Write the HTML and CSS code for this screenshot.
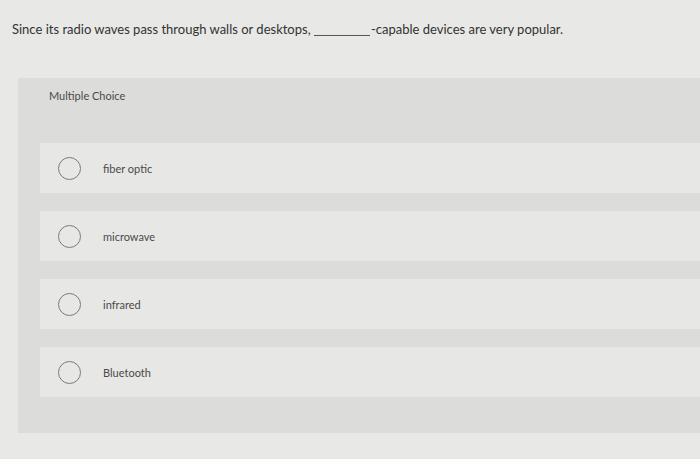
FILE: index.html
```html
<!DOCTYPE html>
<html>
<head>
<meta charset="utf-8">
<link rel="stylesheet" href="styles.css">
</head>
<body>
<div class="page">
  <p class="question">Since its radio waves pass through walls or desktops, <span class="blank"></span>-capable devices are very popular.</p>
  <div class="panel">
    <div class="label">Multiple Choice</div>
    <div class="options">
      <div class="option"><span class="radio"></span><span class="text">fiber optic</span></div>
      <div class="option"><span class="radio"></span><span class="text">microwave</span></div>
      <div class="option"><span class="radio"></span><span class="text">infrared</span></div>
      <div class="option"><span class="radio"></span><span class="text">Bluetooth</span></div>
    </div>
  </div>
</div>
</body>
</html>
```
FILE: styles.css
```css
html, body {
  margin: 0;
  padding: 0;
  background: #e8e8e6;
  height: 100%;
}
.page {
  font-family: "Lato", "Open Sans", "Liberation Sans", sans-serif;
  color: #3a3a3a;
  height: 459px;
  overflow: hidden;
}
.question {
  margin: 0;
  padding: 20px 0 0 12px;
  font-size: 13px;
  line-height: 18px;
  color: #333;
}
.blank {
  display: inline-block;
  width: 56px;
  border-bottom: 1px solid #555;
  margin-right: 1px;
  vertical-align: -2px;
}
.panel {
  margin: 40px 0 0 18px;
  background: #dcdcda;
  height: 355px;
  padding: 10px 0 0 0;
  box-sizing: border-box;
}
.label {
  font-size: 11px;
  color: #4a4a4a;
  padding-left: 31px;
  line-height: 16px;
}
.options {
  display: flex;
  flex-direction: column;
  gap: 18px;
  margin: 39px 0 0 22px;
}
.option {
  display: flex;
  align-items: center;
  height: 50px;
  background: #e7e7e5;
  padding-left: 18px;
}
.radio {
  width: 21px;
  height: 21px;
  border: 1.5px solid #7a7a7c;
  border-radius: 50%;
  flex: none;
}
.text {
  font-size: 11px;
  color: #4a4a4a;
  margin-left: 22px;
}
```
